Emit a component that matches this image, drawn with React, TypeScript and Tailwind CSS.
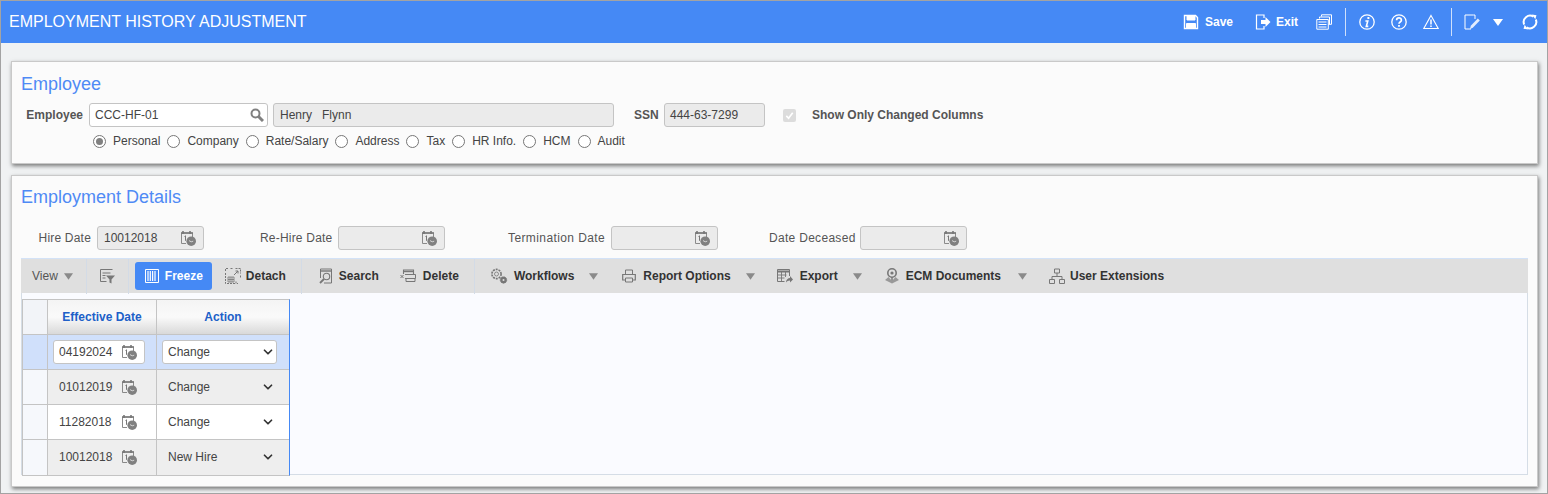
import { ChevronDown } from 'lucide-react';

const CalClock = ({ className = '' }: { className?: string }) => (
  <svg viewBox="0 0 16 16" className={`w-[16px] h-[16px] shrink-0 ${className}`}>
    <path d="M1.5 3h11v5M6 13.5H1.5V3" fill="none" stroke="#8a8a8a" strokeWidth="1" />
    <path d="M3 1v3M10 1v3M1 3h12" stroke="#777" strokeWidth="1.6" fill="none" />
    <path d="M4.5 6.5l1-.7v5" stroke="#777" strokeWidth="1" fill="none" />
    <circle cx="11.2" cy="11.2" r="4.8" fill="#808080" />
    <path d="M9 10.6l2.2 1.2 2-.6" stroke="#ddd" strokeWidth="0.9" fill="none" />
  </svg>
);

const Caret = ({ className = '' }: { className?: string }) => (
  <svg viewBox="0 0 10 7" className={`w-[9px] h-[7px] shrink-0 ${className}`}>
    <path d="M0 0h10L5 7z" fill="#8a8a8a" />
  </svg>
);

const DateField = ({ value = '' }: { value?: string }) => (
  <div className="w-[107px] h-[24px] flex items-center bg-[#ebebeb] border border-[#c4c4c4] rounded-[3px] pl-[6px] text-[#444] shrink-0">
    <span className="flex-1">{value}</span>
    <CalClock className="mr-[7px] -mt-[1px]" />
  </div>
);

const Radio = ({ label, checked, className = '' }: { label: string; checked?: boolean; className?: string }) => (
  <div className={`flex items-center shrink-0 ${className}`}>
    <span className="w-[13px] h-[13px] rounded-full border border-[#767676] bg-white flex items-center justify-center">
      {checked && <span className="w-[7px] h-[7px] rounded-full bg-[#808080]" />}
    </span>
    <span className="ml-[7px] text-[#444]">{label}</span>
  </div>
);

const Sep = ({ className = '' }: { className?: string }) => (
  <div className={`w-px h-[35px] bg-[#d3dbe6] shrink-0 ${className}`} />
);

const Stroke = ({ w = 16, h = 16, children, className = '' }: { w?: number; h?: number; children: React.ReactNode; className?: string }) => (
  <svg width={w} height={h} viewBox={`0 0 ${w} ${h}`} fill="none" stroke="currentColor" className={`shrink-0 ${className}`}>
    {children}
  </svg>
);

const rows = [
  { date: '04192024', action: 'Change', bg: 'bg-[#d0e0fb]', editing: true },
  { date: '01012019', action: 'Change', bg: 'bg-[#eeeeee]' },
  { date: '11282018', action: 'Change', bg: 'bg-white' },
  { date: '10012018', action: 'New Hire', bg: 'bg-[#eeeeee]' },
];

export default function App() {
  return (
    <div className="w-[1548px] h-[494px] overflow-hidden border border-[#a3a3a3] bg-[#f0f2f3] font-['Liberation_Sans',Arial,sans-serif] text-[12px] text-[#333]">
      {/* header */}
      <div className="h-[42px] bg-[#4589f5] flex items-center pl-[8px] pr-[9px] text-white">
        <div className="text-[16px]">EMPLOYMENT HISTORY ADJUSTMENT</div>
        <div className="ml-auto flex items-center font-bold">
          <Stroke>
            <path d="M1.5 1.5h11l2 2v11h-13z" strokeWidth="1.4" />
            <path d="M4 1.5v4.5h8V1.5" fill="#fff" strokeWidth="1" />
            <path d="M3.5 9.5h9v5h-9z" fill="#fff" strokeWidth="1" />
          </Stroke>
          <span className="ml-[6px]">Save</span>
          <Stroke className="ml-[22px]">
            <path d="M9 4V1H1.5v14H9v-3" strokeWidth="1.2" />
            <path d="M6 6h4.5V3l5 5-5 5v-3H6z" fill="#fff" stroke="none" />
          </Stroke>
          <span className="ml-[5px]">Exit</span>
          <Stroke className="ml-[18px]">
            <path d="M5.5 2.5V.8h10v9.5h-2" strokeWidth="1" />
            <path d="M3.5 4.5V3h10v7.5h-1" strokeWidth="1" />
            <path d="M.8 5.5h11.5v9.7H.8z" strokeWidth="1" />
            <path d="M2.5 8h8M2.5 10.5h8M2.5 13h8" strokeWidth="1.2" />
          </Stroke>
          <div className="w-px h-[28px] bg-[#cfe0fb] ml-[13px]" />
          <Stroke className="ml-[13px]">
            <circle cx="8" cy="8" r="7.2" strokeWidth="1.3" />
            <path d="M9.4 3v2" strokeWidth="2" />
            <path d="M6.4 7h2.4l-1.5 5.4h2" strokeWidth="1.6" />
          </Stroke>
          <Stroke className="ml-[16px]">
            <circle cx="8" cy="8" r="7.2" strokeWidth="1.3" />
            <path d="M5.6 6.2c0-3 4.8-3 4.8 0 0 1.8-2.4 1.8-2.4 3.5" strokeWidth="1.7" />
            <path d="M8 10.9v1.8" strokeWidth="1.8" />
          </Stroke>
          <Stroke className="ml-[16px]">
            <path d="M8 1.5L15.2 14.5H.8z" strokeWidth="1.1" />
            <path d="M8 5.5v5M8 11.4v1.6" strokeWidth="1.5" />
          </Stroke>
          <div className="w-px h-[28px] bg-[#cfe0fb] ml-[12px]" />
          <Stroke className="ml-[12px]">
            <path d="M9.5 1H1v14h6" strokeWidth="1" />
            <path d="M9.5 1H11v4" strokeWidth="1" />
            <path d="M6 15l.8-3.2 7-7.3 2 2-7 7.3z" fill="#fff" stroke="none" opacity="0.85" />
          </Stroke>
          <svg viewBox="0 0 10 7" className="w-[10px] h-[7px] ml-[13px] shrink-0">
            <path d="M0 0h10L5 7z" fill="#fff" />
          </svg>
          <Stroke className="ml-[19px]">
            <path d="M2.2 10.5A6.4 6.4 0 0 1 11.5 2.6" strokeWidth="2" />
            <path d="M13.8 5.5A6.4 6.4 0 0 1 4.5 13.4" strokeWidth="2" />
            <path d="M10 .5l4.5.8-1.2 4zM6 15.5l-4.5-.8 1.2-4z" fill="#fff" stroke="none" />
          </Stroke>
        </div>
      </div>

      <div className="pl-[10px] pr-[9px] pt-[18px]">
        {/* employee panel */}
        <div className="h-[103px] border border-[#c9c9c9] bg-[#fbfbfb] shadow-[1px_2px_4px_rgba(0,0,0,0.5)] pt-[11px]">
          <div className="text-[18px] leading-[22px] text-[#4f8af5] pl-[9px]">Employee</div>
          <div className="flex items-center h-[24px] mt-[8px]">
            <div className="w-[71px] text-right font-bold text-[#555] shrink-0">Employee</div>
            <div className="ml-[6px] w-[179px] h-[24px] flex items-center bg-white border border-[#c4c4c4] rounded-[3px] pl-[5px] pr-[3px]">
              <span className="flex-1 text-[#444]">CCC-HF-01</span>
              <Stroke w={14} h={14} className="text-[#808080]">
                <circle cx="5.5" cy="5.5" r="4" strokeWidth="2" />
                <path d="M8.5 8.5l4.5 4.5" strokeWidth="3" />
              </Stroke>
            </div>
            <div className="ml-[5px] w-[341px] h-[24px] flex items-center bg-[#ebebeb] border border-[#c4c4c4] rounded-[3px] pl-[6px] text-[#444] whitespace-pre">
              Henry   Flynn
            </div>
            <div className="ml-[20px] w-[24px] shrink-0 font-bold text-[#555]">SSN</div>
            <div className="ml-[6px] w-[101px] h-[24px] flex items-center bg-[#ebebeb] border border-[#c4c4c4] rounded-[3px] pl-[5px] text-[#444]">
              444-63-7299
            </div>
            <div className="ml-[18px] w-[13px] h-[13px] rounded-[2px] bg-[#dcdcdc] flex items-center justify-center">
              <svg viewBox="0 0 12 12" className="w-[11px] h-[11px]">
                <path d="M2.5 6.5l2.5 2.5 4.5-6" stroke="#fff" strokeWidth="1.8" fill="none" />
              </svg>
            </div>
            <div className="ml-[16px] font-bold text-[#555]">Show Only Changed Columns</div>
          </div>
          <div className="flex items-center h-[16px] mt-[6px] pl-[81px]">
            <Radio label="Personal" checked />
            <Radio label="Company" className="ml-[7px]" />
            <Radio label="Rate/Salary" className="ml-[7px]" />
            <Radio label="Address" className="ml-[7px]" />
            <Radio label="Tax" className="ml-[7px]" />
            <Radio label="HR Info." className="ml-[7px]" />
            <Radio label="HCM" className="ml-[7px]" />
            <Radio label="Audit" className="ml-[7px]" />
          </div>
        </div>

        {/* employment details panel */}
        <div className="h-[312px] mt-[11px] border border-[#c9c9c9] bg-[#fbfbfb] shadow-[1px_2px_4px_rgba(0,0,0,0.5)] pt-[10px] px-[9px]">
          <div className="text-[18px] leading-[22px] text-[#4f8af5]">Employment Details</div>
          <div className="flex items-center h-[24px] mt-[18px] text-[#555] whitespace-nowrap">
            <div className="w-[70px] text-right shrink-0 tracking-[0.2px]">Hire Date</div>
            <div className="ml-[6px]"><DateField value="10012018" /></div>
            <div className="ml-[56px] w-[72px] text-right shrink-0 tracking-[0.2px]">Re-Hire Date</div>
            <div className="ml-[6px]"><DateField /></div>
            <div className="ml-[63px] w-[97px] text-right shrink-0 tracking-[0.4px]">Termination Date</div>
            <div className="ml-[6px]"><DateField /></div>
            <div className="ml-[51px] w-[85px] text-right shrink-0 tracking-[0.3px]">Date Deceased</div>
            <div className="ml-[6px]"><DateField /></div>
          </div>

          {/* toolbar */}
          <div className="h-[36px] mt-[8px] bg-[#dfdfdf] border-t border-t-[#d3e2f7] border-b border-b-[#c8c8c8] flex items-center text-[#333] font-bold">
            <span className="ml-[11px] font-normal text-[#555]">View</span>
            <Caret className="ml-[6px]" />
            <Sep className="ml-[13px]" />
            <Stroke className="ml-[12px] text-[#777]">
              <path d="M1.5 1.5h12M1.5 1.5v12h6" strokeWidth="1" />
              <path d="M3.5 5h8M3.5 7.5h3M3.5 10h3" strokeWidth="1.2" />
              <path d="M7 7.5h9l-3.5 4v4l-2-1v-3z" fill="#777" stroke="none" />
            </Stroke>
            <Sep className="ml-[13px]" />
            <div className="ml-[6px] w-[77px] h-[28px] rounded-[3px] bg-[#4589f5] text-white flex items-center pl-[10px] shrink-0">
              <Stroke w={14} h={14}>
                <path d="M.5.5h13v13H.5z" strokeWidth="1" />
                <path d="M3 2v10M5.3 2v10M7.6 2v10M10 2v10" strokeWidth="1.2" />
              </Stroke>
              <span className="ml-[6px]">Freeze</span>
            </div>
            <Stroke className="ml-[13px] text-[#777]">
              <path d="M.5 5v10.5H11V13M.5 3V.5h3M5.5.5h3M10.5.5h5v5M15.5 7.5v3M13 15.5h-1" strokeWidth="1" strokeDasharray="2 1" />
              <path d="M3 9h6v5H3zM3 11.5h6M5 9v5M7 9v5" strokeWidth="0.8" />
              <path d="M9 7l4-4M10.5 3H13v2.5" strokeWidth="1" />
            </Stroke>
            <span className="ml-[5px]">Detach</span>
            <Sep className="ml-[15px]" />
            <Stroke w={14} h={16} className="ml-[17px] text-[#777]">
              <path d="M1.5 10V1h11v14H5" strokeWidth="1" />
              <path d="M1.5 3h11" strokeWidth="1.4" />
              <circle cx="7.5" cy="8.5" r="3.2" strokeWidth="1.1" />
              <path d="M5 11L1 15" strokeWidth="1.8" />
            </Stroke>
            <span className="ml-[6px]">Search</span>
            <Stroke className="ml-[21px] text-[#777]">
              <path d="M3.5 6V2h10v4" strokeWidth="1.1" />
              <path d="M3.5 3.5h10" strokeWidth="1.4" />
              <path d="M5 6.5h10.5v4H5M6 10.5v3h9v-3" strokeWidth="1" />
              <path d="M.5 7l3 3M3.5 7l-3 3" strokeWidth="1" />
            </Stroke>
            <span className="ml-[7px]">Delete</span>
            <Sep className="ml-[15px]" />
            <Stroke w={18} h={16} className="ml-[15px] text-[#777]">
              <circle cx="6.5" cy="6" r="4.6" strokeWidth="1.6" strokeDasharray="2 0.9" />
              <circle cx="6.5" cy="6" r="2" strokeWidth="0.8" />
              <circle cx="13.5" cy="12" r="3.2" fill="#777" strokeWidth="0.8" strokeDasharray="1.5 0.6" />
              <circle cx="13.5" cy="12" r="1" fill="#dfdfdf" stroke="none" />
            </Stroke>
            <span className="ml-[6px]">Workflows</span>
            <Caret className="ml-[15px]" />
            <Stroke w={14} h={14} className="ml-[24px] text-[#777]">
              <path d="M3.5 5V1h7v4" strokeWidth="1" />
              <path d="M.7 5.5h12.6v5.5H.7z" strokeWidth="1.2" />
              <path d="M3.5 9h7v4h-7z" fill="#dfdfdf" strokeWidth="1" />
            </Stroke>
            <span className="ml-[7px]">Report Options</span>
            <Caret className="ml-[15px]" />
            <Stroke className="ml-[22px] text-[#777]">
              <path d="M.5 1.5h12V8M.5 1.5v12h7" strokeWidth="1" />
              <path d="M.5 3.5h12" strokeWidth="2" />
              <path d="M.5 7h9M.5 10h7M4.5 3v10M8.5 3v6" strokeWidth="0.9" />
              <path d="M9 14.5c0-3 2-4.5 4-4.5V8l3 3.5-3 3V12.5c-2 0-3 .8-4 2z" fill="#777" stroke="none" />
            </Stroke>
            <span className="ml-[7px]">Export</span>
            <Caret className="ml-[15px]" />
            <Stroke className="ml-[22px] text-[#777]">
              <circle cx="8" cy="5" r="4.2" strokeWidth="1.6" />
              <circle cx="8" cy="5" r="1.6" fill="#777" stroke="none" />
              <path d="M8 9v4" strokeWidth="1.4" />
              <path d="M4.5 9L1 12l7 3.5 7-3.5-3.5-3L8 13z" fill="#999" stroke="none" />
            </Stroke>
            <span className="ml-[6px]">ECM Documents</span>
            <Caret className="ml-[17px]" />
            <Stroke className="ml-[22px] text-[#777]">
              <path d="M5.5 1h5v4h-5zM.5 11.5h5v4h-5zM10.5 11.5h5v4h-5z" strokeWidth="1" />
              <path d="M8 5v3.5M3 11.5v-3h10v3" strokeWidth="1" />
            </Stroke>
            <span className="ml-[5px]">User Extensions</span>
          </div>

          {/* grid area */}
          <div className="h-[182px] bg-[#fafbff] border-x border-b border-[#d5dde6] pt-[6px] -mt-px">
            <div className="w-[268px] border-t border-l border-b border-[#c4c4c4] border-r border-r-[#4589f5]">
              <div className="flex h-[35px] border-b border-[#c4c4c4]">
                <div className="w-[25px] bg-[#f2f4f8] border-r border-[#c4c4c4] shrink-0" />
                <div className="w-[109px] border-r border-[#c4c4c4] flex items-center justify-center font-bold text-[#2060c8] bg-gradient-to-b from-[#f4f4f4] via-[#fafafa] to-[#d9d9d9] shrink-0">
                  Effective Date
                </div>
                <div className="flex-1 flex items-center justify-center font-bold text-[#2060c8] bg-gradient-to-b from-[#f4f4f4] via-[#fafafa] to-[#d9d9d9]">
                  Action
                </div>
              </div>
              {rows.map((r, i) => (
                <div key={r.date} className={`flex h-[35px] ${i < rows.length - 1 ? 'border-b border-[#c4c4c4]' : ''} ${r.bg}`}>
                  <div className={`w-[25px] border-r border-[#c4c4c4] shrink-0 ${r.editing ? '' : 'bg-[#f6f8fc]'}`} />
                  <div className="w-[109px] border-r border-[#c4c4c4] flex items-center pl-[5px] shrink-0">
                    <div className={`w-[92px] h-[24px] flex items-center pl-[5px] rounded-[3px] text-[#444] border ${r.editing ? 'bg-white border-[#c4c4c4]' : 'border-transparent'}`}>
                      <span className="w-[62px] -mt-[1px]">{r.date}</span>
                      <CalClock className="-mt-[1px]" />
                    </div>
                  </div>
                  <div className="flex-1 flex items-center pl-[5px]">
                    <div className={`w-[115px] h-[24px] flex items-center pl-[5px] pr-[1px] rounded-[3px] text-[#444] border ${r.editing ? 'bg-white border-[#c4c4c4]' : 'border-transparent'}`}>
                      <span className="flex-1 -mt-[1px]">{r.action}</span>
                      <ChevronDown size={14} strokeWidth={3} className="text-[#333] -mt-[1px]" />
                    </div>
                  </div>
                </div>
              ))}
            </div>
          </div>
        </div>
      </div>
    </div>
  );
}
